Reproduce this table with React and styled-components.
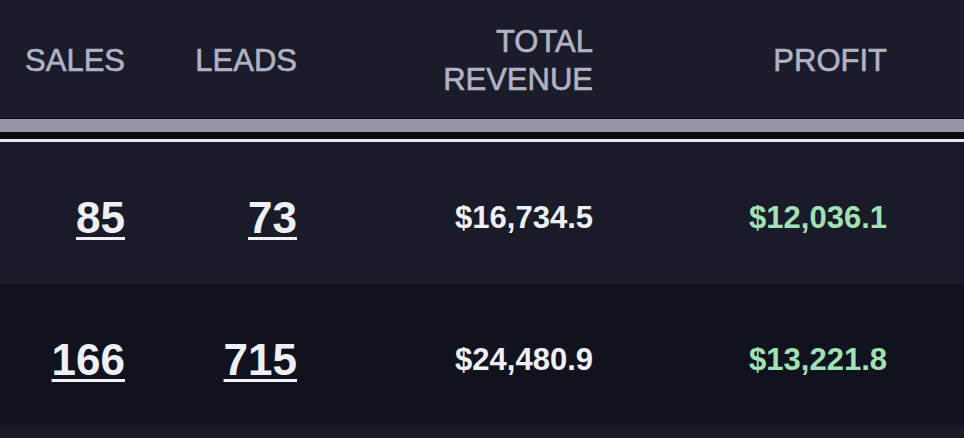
import React from 'react';
import styled, { createGlobalStyle } from 'styled-components';

const rows = [
	{ sales: 85, leads: 73, revenue: '$16,734.5', profit: '$12,036.1' },
	{ sales: 166, leads: 715, revenue: '$24,480.9', profit: '$13,221.8' },
];

const GlobalStyle = createGlobalStyle`
	html, body {
		margin: 0;
		padding: 0;
		background: #1b1c2a;
		font-family: "Liberation Sans", Arial, sans-serif;
		overflow: hidden;
	}
`;

const Table = styled.div`
	width: 964px;
	display: flex;
	flex-direction: column;
`;

const Row = styled.div`
	display: grid;
	grid-template-columns: 125px 172px 296px 294px 1fr;
	align-items: center;
	height: ${p => p.$height}px;
	padding-top: ${p => p.$shift || 0}px;
	box-sizing: border-box;
	background: ${p => p.$bg};
`;

const HeadCell = styled.div`
	text-align: right;
	color: #b1b2c4;
	font-size: 31px;
	line-height: 38px;
	-webkit-text-stroke: 0.6px #b1b2c4;
`;

// thick grey rule, dark gap, thin white rule under the header
const Divider = styled.div`
	height: 24px;
	background: linear-gradient(
		to bottom,
		#0b0c12 0 1px,
		#9596a8 1px 14px,
		#0b0c12 14px 21px,
		#e8e8ee 21px 24px
	);
`;

const CountLink = styled.a`
	color: #eef0f6;
	font-size: 44px;
	font-weight: 700;
	text-decoration: underline;
	text-decoration-thickness: 3px;
	text-underline-offset: 4px;
	cursor: pointer;
`;

const Money = styled.div`
	text-align: right;
	font-size: 31px;
	font-weight: 700;
	color: ${p => (p.$positive ? '#a0e2b6' : '#eef0f6')};
`;

const Cell = styled.div`
	text-align: right;
`;

export default function App() {
	return (
		<>
			<GlobalStyle />
			<Table>
				<Row $height={118} $shift={3} $bg="#1b1c2a">
					<HeadCell>SALES</HeadCell>
					<HeadCell>LEADS</HeadCell>
					<HeadCell>TOTAL<br />REVENUE</HeadCell>
					<HeadCell>PROFIT</HeadCell>
					<div />
				</Row>
				<Divider />
				{rows.map((r, i) => (
					<Row key={i} $height={i === 0 ? 142 : 141} $shift={10} $bg={i % 2 === 0 ? '#1a1b28' : '#10121e'}>
						<Cell><CountLink>{r.sales}</CountLink></Cell>
						<Cell><CountLink>{r.leads}</CountLink></Cell>
						<Money>{r.revenue}</Money>
						<Money $positive>{r.profit}</Money>
						<div />
					</Row>
				))}
			</Table>
		</>
	);
}
